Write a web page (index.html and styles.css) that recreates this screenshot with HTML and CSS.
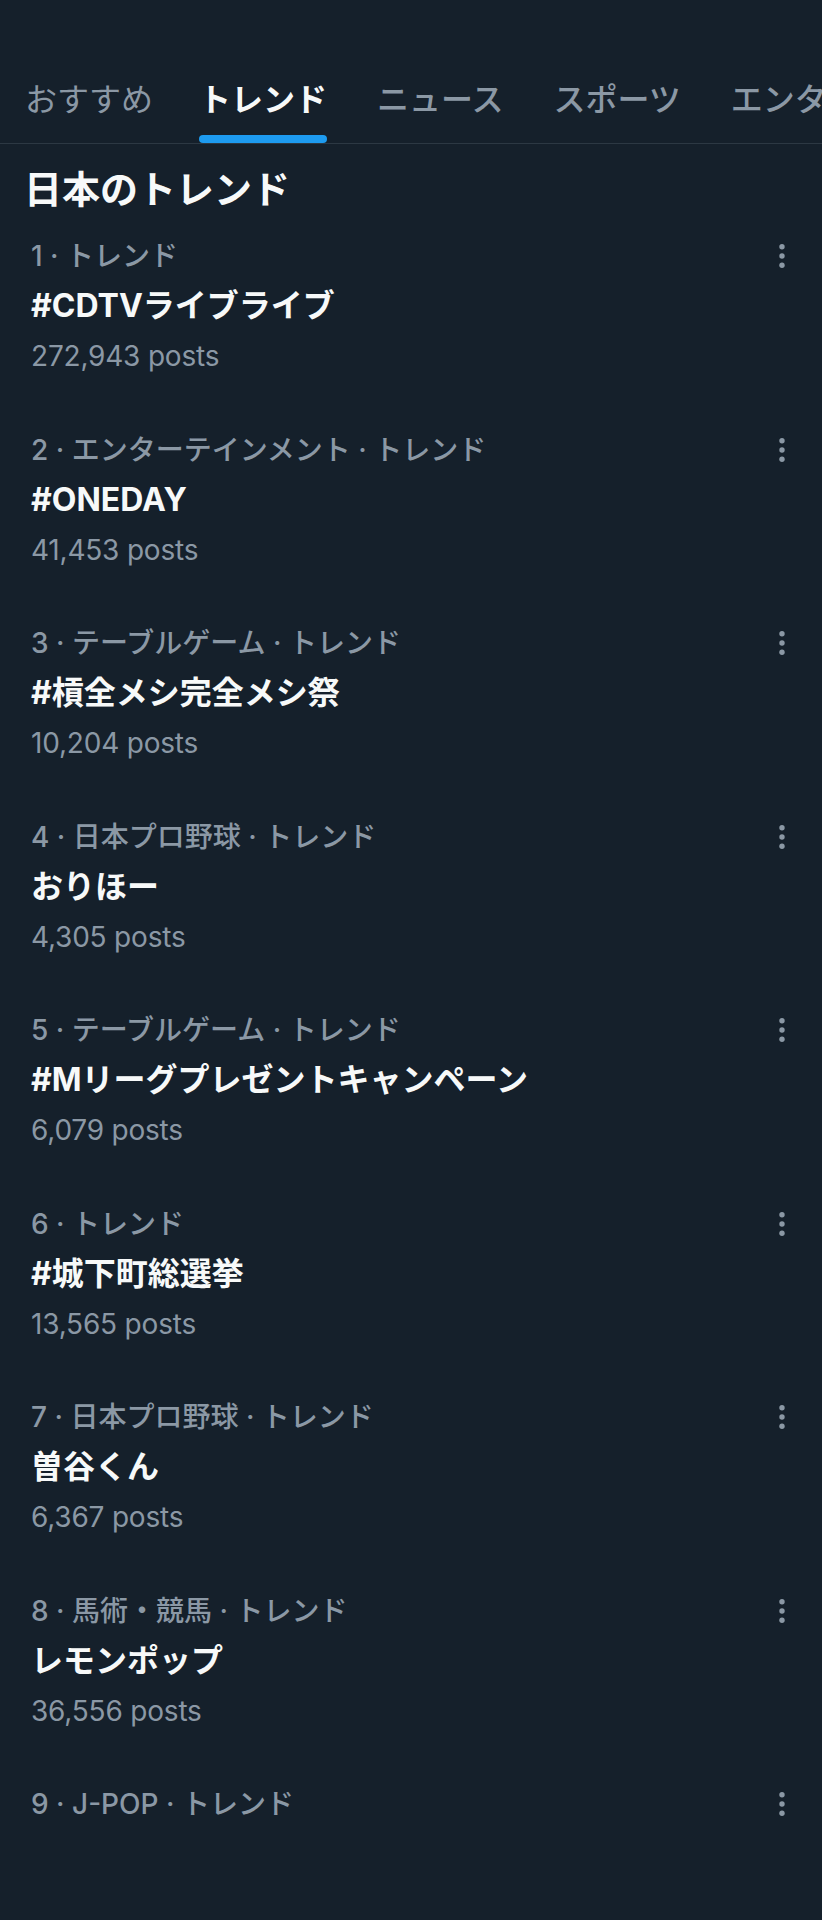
FILE: index.html
```html
<!DOCTYPE html>
<html lang="ja">
<head>
<meta charset="utf-8">
<title>トレンド</title>
<link rel="stylesheet" href="styles.css">
</head>
<body>
<div class="page">
  <nav class="tabs">
    <div class="tab first"><span class="tab-label">おすすめ</span><span class="tab-bar"></span></div>
    <div class="tab active"><span class="tab-label">トレンド</span><span class="tab-bar"></span></div>
    <div class="tab"><span class="tab-label">ニュース</span><span class="tab-bar"></span></div>
    <div class="tab"><span class="tab-label">スポーツ</span><span class="tab-bar"></span></div>
    <div class="tab"><span class="tab-label">エンターテインメント</span><span class="tab-bar"></span></div>
  </nav>

  <h1 class="heading">日本のトレンド</h1>

  <ul class="trends">
    <li class="trend">
      <div class="trend-body">
        <div class="meta">1 · トレンド</div>
        <div class="title">#CDTVライブライブ</div>
        <div class="posts">272,943 posts</div>
      </div>
      <div class="more"><svg viewBox="0 0 24 28" width="24" height="28"><circle cx="12" cy="4.7" r="2.7"/><circle cx="12" cy="14" r="2.7"/><circle cx="12" cy="23.3" r="2.7"/></svg></div>
    </li>
    <li class="trend">
      <div class="trend-body">
        <div class="meta">2 · エンターテインメント · トレンド</div>
        <div class="title">#ONEDAY</div>
        <div class="posts">41,453 posts</div>
      </div>
      <div class="more"><svg viewBox="0 0 24 28" width="24" height="28"><circle cx="12" cy="4.7" r="2.7"/><circle cx="12" cy="14" r="2.7"/><circle cx="12" cy="23.3" r="2.7"/></svg></div>
    </li>
    <li class="trend">
      <div class="trend-body">
        <div class="meta">3 · テーブルゲーム · トレンド</div>
        <div class="title">#槓全メシ完全メシ祭</div>
        <div class="posts">10,204 posts</div>
      </div>
      <div class="more"><svg viewBox="0 0 24 28" width="24" height="28"><circle cx="12" cy="4.7" r="2.7"/><circle cx="12" cy="14" r="2.7"/><circle cx="12" cy="23.3" r="2.7"/></svg></div>
    </li>
    <li class="trend">
      <div class="trend-body">
        <div class="meta">4 · 日本プロ野球 · トレンド</div>
        <div class="title">おりほー</div>
        <div class="posts">4,305 posts</div>
      </div>
      <div class="more"><svg viewBox="0 0 24 28" width="24" height="28"><circle cx="12" cy="4.7" r="2.7"/><circle cx="12" cy="14" r="2.7"/><circle cx="12" cy="23.3" r="2.7"/></svg></div>
    </li>
    <li class="trend">
      <div class="trend-body">
        <div class="meta">5 · テーブルゲーム · トレンド</div>
        <div class="title">#Mリーグプレゼントキャンペーン</div>
        <div class="posts">6,079 posts</div>
      </div>
      <div class="more"><svg viewBox="0 0 24 28" width="24" height="28"><circle cx="12" cy="4.7" r="2.7"/><circle cx="12" cy="14" r="2.7"/><circle cx="12" cy="23.3" r="2.7"/></svg></div>
    </li>
    <li class="trend">
      <div class="trend-body">
        <div class="meta">6 · トレンド</div>
        <div class="title">#城下町総選挙</div>
        <div class="posts">13,565 posts</div>
      </div>
      <div class="more"><svg viewBox="0 0 24 28" width="24" height="28"><circle cx="12" cy="4.7" r="2.7"/><circle cx="12" cy="14" r="2.7"/><circle cx="12" cy="23.3" r="2.7"/></svg></div>
    </li>
    <li class="trend">
      <div class="trend-body">
        <div class="meta">7 · 日本プロ野球 · トレンド</div>
        <div class="title">曽谷くん</div>
        <div class="posts">6,367 posts</div>
      </div>
      <div class="more"><svg viewBox="0 0 24 28" width="24" height="28"><circle cx="12" cy="4.7" r="2.7"/><circle cx="12" cy="14" r="2.7"/><circle cx="12" cy="23.3" r="2.7"/></svg></div>
    </li>
    <li class="trend">
      <div class="trend-body">
        <div class="meta">8 · 馬術・競馬 · トレンド</div>
        <div class="title">レモンポップ</div>
        <div class="posts">36,556 posts</div>
      </div>
      <div class="more"><svg viewBox="0 0 24 28" width="24" height="28"><circle cx="12" cy="4.7" r="2.7"/><circle cx="12" cy="14" r="2.7"/><circle cx="12" cy="23.3" r="2.7"/></svg></div>
    </li>
    <li class="trend">
      <div class="trend-body">
        <div class="meta">9 · J-POP · トレンド</div>
      </div>
      <div class="more"><svg viewBox="0 0 24 28" width="24" height="28"><circle cx="12" cy="4.7" r="2.7"/><circle cx="12" cy="14" r="2.7"/><circle cx="12" cy="23.3" r="2.7"/></svg></div>
    </li>
  </ul>
</div>
</body>
</html>
```

FILE: styles.css
```css
html, body {
  margin: 0;
  padding: 0;
  background: #15202b;
}

body {
  font-family: Inter, "Noto Sans CJK JP", sans-serif;
  color: #f7f9f9;
}

.page {
  width: 822px;
  min-height: 1920px;
  overflow: hidden;
  background: #15202b;
}

.tabs {
  display: flex;
  gap: 50px;
  padding-left: 25px;
  border-bottom: 1px solid #2c3843;
  overflow: hidden;
  white-space: nowrap;
}

.tab {
  display: flex;
  flex-direction: column;
  align-items: stretch;
  flex-shrink: 0;
  padding-top: 77px;
}

.tab.first {
  margin-right: -4px;
}

.tab-label {
  font-family: "Noto Sans CJK JP", sans-serif;
  font-size: 32px;
  line-height: 40px;
  font-weight: 500;
  color: #8b98a5;
}

.tab.first .tab-label {
  font-weight: 400;
}

.tab.active .tab-label {
  font-weight: 700;
  color: #f7f9f9;
}

.tab-bar {
  display: block;
  height: 8px;
  margin-top: 18px;
  border-radius: 4px;
  background: transparent;
}

.tab.active .tab-bar {
  background: #1d9bf0;
}

.heading {
  margin: 21px 0 0;
  padding-left: 24px;
  font-family: "Noto Sans CJK JP", sans-serif;
  font-size: 38px;
  line-height: 44px;
  font-weight: 700;
  color: #f7f9f9;
}

.trends {
  list-style: none;
  margin: 0;
  padding: 0;
}

.trend {
  display: flex;
  align-items: flex-start;
  padding: 22px 28px 21.5px 31px;
}

.trend-body {
  flex: 1;
  min-width: 0;
}

.meta {
  font-size: 28px;
  line-height: 50px;
  font-weight: 500;
  color: #8b98a5;
}

.title {
  font-size: 32px;
  line-height: 50px;
  font-weight: 700;
  color: #f7f9f9;
}

.posts {
  font-size: 28px;
  line-height: 50px;
  letter-spacing: -0.2px;
  color: #8b98a5;
}

.more {
  width: 24px;
  height: 50px;
  display: flex;
  align-items: center;
  justify-content: center;
}

.more svg {
  fill: #8b98a5;
  display: block;
}
```
